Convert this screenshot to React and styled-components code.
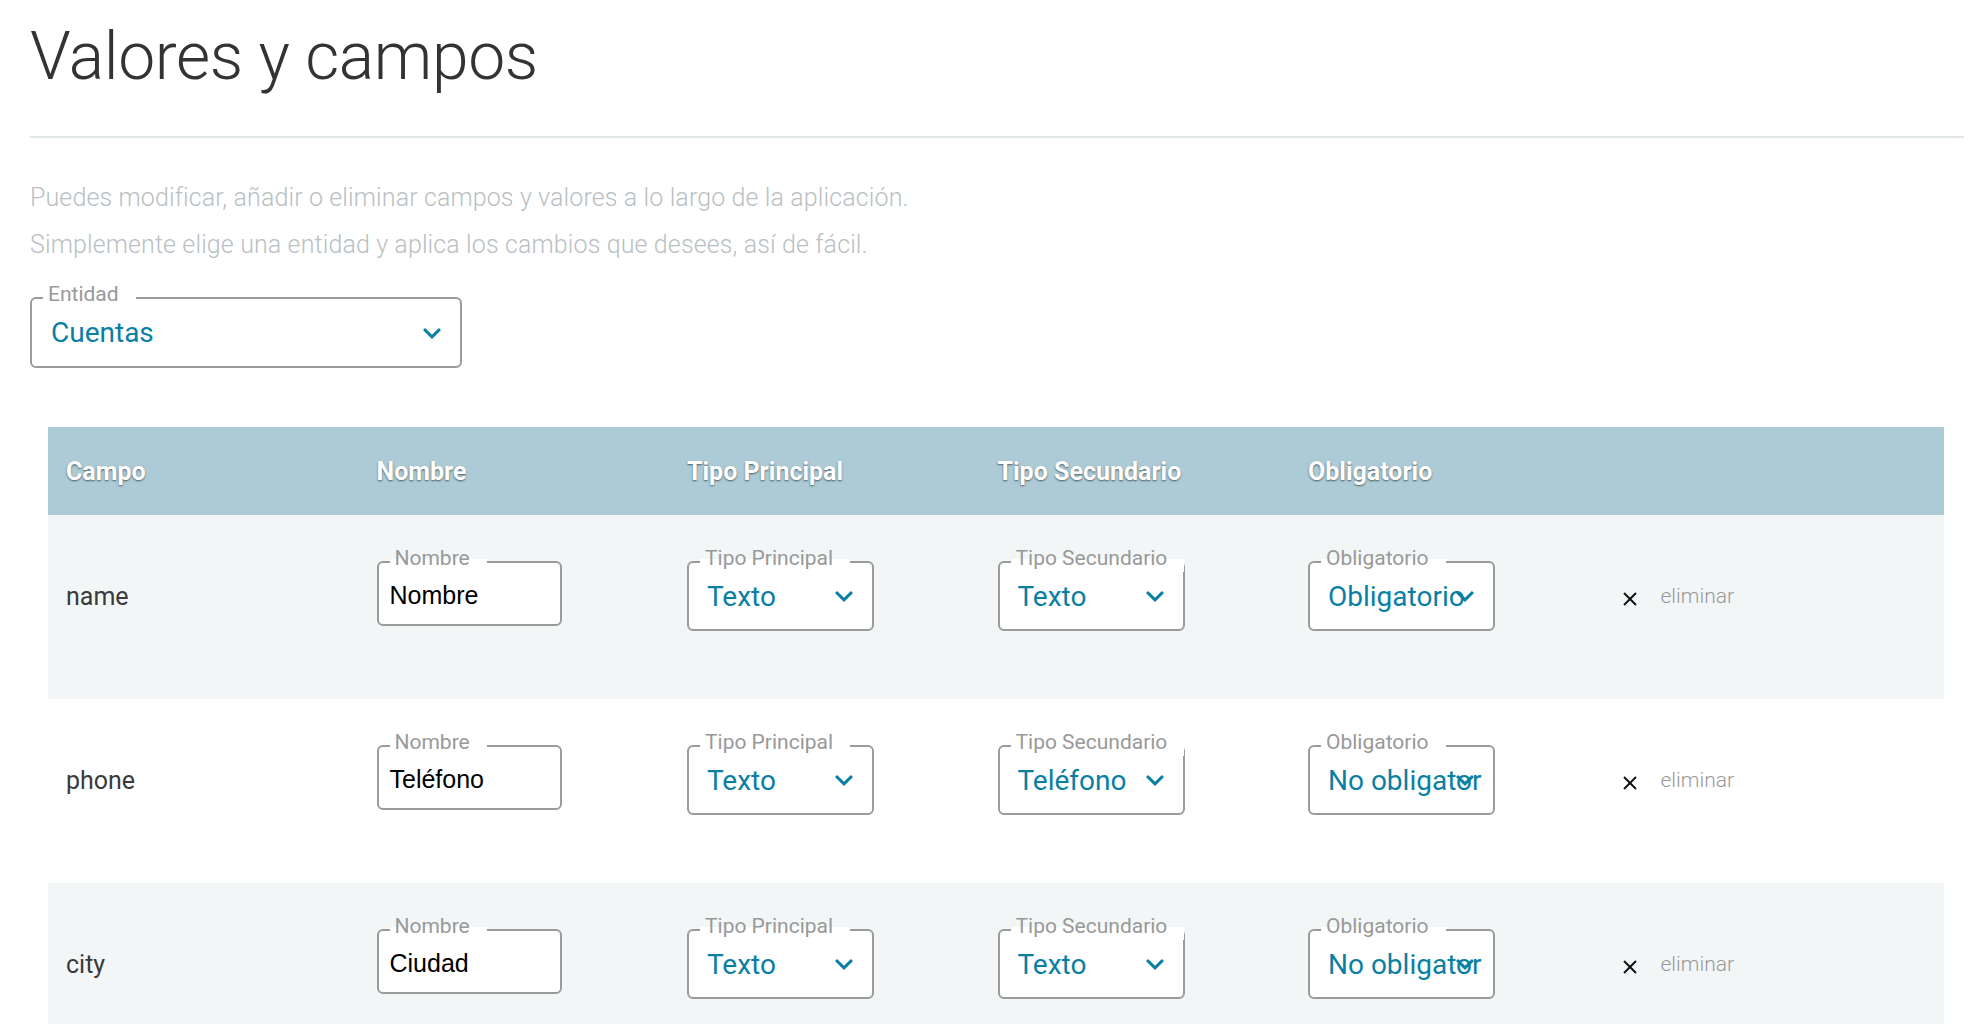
import React from 'react'
import styled, { createGlobalStyle } from 'styled-components'

const GlobalStyle = createGlobalStyle`
  html, body {
    margin: 0;
    padding: 0;
    background: #fff;
  }
  body {
    font-family: Roboto, "Noto Sans", sans-serif;
    -webkit-font-smoothing: antialiased;
  }
`

const Page = styled.div`
  padding: 0 8px 0 30px;
`

const Title = styled.h1`
  margin: 0;
  padding-top: 18px;
  font-size: 66px;
  line-height: 77px;
  font-weight: 300;
  letter-spacing: -0.4px;
  color: #333;
`

const Divider = styled.hr`
  margin: 41px 0 0;
  border: 0;
  height: 2px;
  background: #e1e6e9;
`

const Intro = styled.div`
  margin-top: 36px;
`

const Paragraph = styled.p`
  margin: 0;
  font-size: 25px;
  line-height: 47px;
  font-weight: 300;
  letter-spacing: 0.12px;
  color: #b9bfc3;
`

const FieldBox = styled.div`
  position: relative;
  box-sizing: border-box;
  width: ${p => p.$width}px;
  height: ${p => p.$height}px;
  border: 2px solid #9b9b9b;
  border-radius: 6px;
  background: #fff;
  display: flex;
  align-items: center;
`

const EntityField = styled(FieldBox)`
  margin-top: 29px;
`

const Legend = styled.span`
  position: absolute;
  left: 11px;
  top: -4px;
  height: 13px;
  box-sizing: border-box;
  padding: 0 17px 3px 5px;
  display: flex;
  align-items: flex-end;
  background: #fff;
  font-size: 21px;
  line-height: 1;
  color: #999;
  white-space: nowrap;
`

const SelectValue = styled.div`
  flex: 1;
  min-width: 0;
  margin-right: 11px;
  padding-left: ${p => p.$inset || 18}px;
  overflow: hidden;
  white-space: nowrap;
  font-size: 28px;
  color: #0a7fa4;
`

const InputValue = styled.div`
  padding: 3px 0 0 11px;
  font-family: "Liberation Sans", Arial, sans-serif;
  font-size: 25px;
  color: #000;
`

const ChevronIcon = styled.svg`
  position: absolute;
  right: 10px;
  top: 50%;
  transform: translateY(-50%);
  fill: #0a7fa4;
`

const Table = styled.div`
  margin: 59px 20px 0 18px;
`

const Grid = styled.div`
  display: grid;
  grid-template-columns: repeat(5, 310.5px) 1fr;
  padding-left: 18px;
`

const HeaderRow = styled(Grid)`
  height: 88px;
  align-items: center;
  background: #adcbd6;
`

const HeadCell = styled.div`
  font-size: 25px;
  font-weight: 700;
  color: #fff;
  text-shadow: 0 1px 2px rgba(0, 0, 0, 0.55);
`

const Row = styled(Grid)`
  box-sizing: border-box;
  height: 184px;
  padding-top: 46px;
  align-items: start;
  background: ${p => (p.$shaded ? '#f2f6f7' : '#fff')};
`

const Cell = styled.div`
  height: 70px;
  display: flex;
  align-items: center;
`

const KeyText = styled.span`
  font-size: 25px;
  color: #3a3a3a;
`

const RemoveCell = styled(Cell)`
  gap: 24px;
  padding-left: 4px;
`

const RemoveIcon = styled.svg`
  margin-top: 6px;
  stroke: #111;
  stroke-width: 2;
`

const RemoveText = styled.span`
  font-size: 21px;
  font-weight: 300;
  color: #999;
`

const Chevron = () => (
  <ChevronIcon width="36" height="36" viewBox="0 0 24 24">
    <path d="M7.41 8.59 12 13.17l4.59-4.58L18 10l-6 6-6-6 1.41-1.41z" />
  </ChevronIcon>
)

const Select = ({ label, value, width = 187, inset }) => (
  <FieldBox $width={width} $height={70}>
    <Legend>{label}</Legend>
    <SelectValue $inset={inset}>{value}</SelectValue>
    <Chevron />
  </FieldBox>
)

const TextField = ({ label, value }) => (
  <FieldBox $width={185} $height={65}>
    <Legend>{label}</Legend>
    <InputValue>{value}</InputValue>
  </FieldBox>
)

const columns = ['Campo', 'Nombre', 'Tipo Principal', 'Tipo Secundario', 'Obligatorio', '']

const fields = [
  { key: 'name', name: 'Nombre', main: 'Texto', secondary: 'Texto', required: 'Obligatorio' },
  { key: 'phone', name: 'Teléfono', main: 'Texto', secondary: 'Teléfono', required: 'No obligatorio' },
  { key: 'city', name: 'Ciudad', main: 'Texto', secondary: 'Texto', required: 'No obligatorio' },
]

export default function App() {
  return (
    <>
      <GlobalStyle />
      <Page>
        <Title>Valores y campos</Title>
        <Divider />
        <Intro>
          <Paragraph>Puedes modificar, añadir o eliminar campos y valores a lo largo de la aplicación.</Paragraph>
          <Paragraph>Simplemente elige una entidad y aplica los cambios que desees, así de fácil.</Paragraph>
        </Intro>
        <EntityField $width={432} $height={71}>
          <Legend>Entidad</Legend>
          <SelectValue $inset={19}>Cuentas</SelectValue>
          <Chevron />
        </EntityField>

        <Table>
          <HeaderRow>
            {columns.map((c, i) => (
              <HeadCell key={i}>{c}</HeadCell>
            ))}
          </HeaderRow>
          {fields.map((f, i) => (
            <Row key={f.key} $shaded={i % 2 === 0}>
              <Cell>
                <KeyText>{f.key}</KeyText>
              </Cell>
              <div>
                <TextField label="Nombre" value={f.name} />
              </div>
              <div>
                <Select label="Tipo Principal" value={f.main} />
              </div>
              <div>
                <Select label="Tipo Secundario" value={f.secondary} />
              </div>
              <div>
                <Select label="Obligatorio" value={f.required} />
              </div>
              <RemoveCell>
                <RemoveIcon width="14" height="14" viewBox="0 0 14 14">
                  <line x1="1" y1="1" x2="13" y2="13" />
                  <line x1="13" y1="1" x2="1" y2="13" />
                </RemoveIcon>
                <RemoveText>eliminar</RemoveText>
              </RemoveCell>
            </Row>
          ))}
        </Table>
      </Page>
    </>
  )
}
